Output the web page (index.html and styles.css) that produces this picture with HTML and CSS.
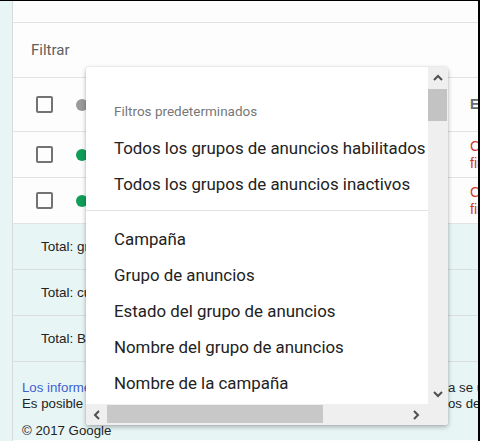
FILE: index.html
```html
<!DOCTYPE html>
<html lang="es">
<head>
<meta charset="utf-8">
<title>Filtrar</title>
<link rel="stylesheet" href="styles.css">
</head>
<body>
<div class="frame">
  <div class="rail"></div>
  <div class="main">
    <div class="topbar"></div>
    <div class="filterbar">Filtrar</div>
    <div class="row row-head">
      <div class="c-check"><span class="cb"></span></div>
      <div class="c-dot"><span class="dot dot-gray"></span></div>
      <div class="c-status status-head">Estado</div>
    </div>
    <div class="row">
      <div class="c-check"><span class="cb"></span></div>
      <div class="c-dot"><span class="dot dot-green"></span></div>
      <div class="c-status status-red">Campaña<br>finalizada</div>
    </div>
    <div class="row">
      <div class="c-check"><span class="cb"></span></div>
      <div class="c-dot"><span class="dot dot-green"></span></div>
      <div class="c-status status-red">Campaña<br>finalizada</div>
    </div>
    <div class="total">Total: grupos de anuncios filtrados</div>
    <div class="total">Total: cuenta</div>
    <div class="total">Total: Búsqueda</div>
    <div class="footer">
      <div class="fline"><span class="fl link">Los informes de datos se actualizan periódicamente</span><span class="fr">a se usan para</span></div>
      <div class="fline"><span class="fl">Es posible que algunos datos no estén disponibles</span><span class="fr">os de la cuenta</span></div>
      <div class="copy">© 2017 Google</div>
    </div>
  </div>

  <div class="dropdown">
    <div class="dd-content">
      <div class="dd-head">Filtros predeterminados</div>
      <div class="dd-item">Todos los grupos de anuncios habilitados</div>
      <div class="dd-item">Todos los grupos de anuncios inactivos</div>
      <div class="dd-divider"></div>
      <div class="dd-item">Campaña</div>
      <div class="dd-item">Grupo de anuncios</div>
      <div class="dd-item">Estado del grupo de anuncios</div>
      <div class="dd-item">Nombre del grupo de anuncios</div>
      <div class="dd-item">Nombre de la campaña</div>
    </div>
    <div class="vscroll">
      <div class="sb-btn sb-up"><svg width="10" height="7" viewBox="0 0 10 7"><path d="M1 6 L5 2 L9 6" fill="none" stroke="#505050" stroke-width="2"/></svg></div>
      <div class="vthumb"></div>
      <div class="sb-track"></div>
      <div class="sb-btn sb-down"><svg width="10" height="7" viewBox="0 0 10 7"><path d="M1 1 L5 5 L9 1" fill="none" stroke="#505050" stroke-width="2"/></svg></div>
    </div>
    <div class="hscroll">
      <div class="sb-btn sb-left"><svg width="7" height="10" viewBox="0 0 7 10"><path d="M6 1 L2 5 L6 9" fill="none" stroke="#505050" stroke-width="2"/></svg></div>
      <div class="hthumb"></div>
      <div class="sb-track"></div>
      <div class="sb-btn sb-right"><svg width="7" height="10" viewBox="0 0 7 10"><path d="M1 1 L5 5 L1 9" fill="none" stroke="#505050" stroke-width="2"/></svg></div>
    </div>
    <div class="corner"></div>
  </div>
</div>
</body>
</html>
```

FILE: styles.css
```css
html, body {
  margin: 0;
  padding: 0;
}
body {
  width: 478px;
  height: 440px;
  border-top: 1px solid #000;
  border-right: 2px solid #000;
  overflow: hidden;
  background: #fff;
  font-family: "Liberation Sans", Arial, sans-serif;
}
.frame {
  position: relative;
  display: flex;
  height: 440px;
}
.rail {
  width: 12px;
  flex: none;
  background: #e8f5f5;
  border-right: 1px solid #d6dcdc;
}
.main {
  width: 465px;
  flex: none;
  overflow: hidden;
  background: #fdfdfd;
}
.topbar {
  height: 21px;
  border-bottom: 1px solid #e3e3e3;
}
.filterbar {
  height: 54px;
  border-bottom: 1px solid #e3e3e3;
  display: flex;
  align-items: center;
  padding-left: 18px;
  font-family: Roboto, "Liberation Sans", sans-serif;
  font-size: 15px;
  color: #62605c;
}
.row {
  display: grid;
  grid-template-columns: 50px 407px 100px;
  height: 45px;
  border-bottom: 1px solid #e3e3e3;
  align-items: center;
}
.row-head {
  height: 53px;
}
.c-check {
  padding-left: 23px;
  display: flex;
}
.cb {
  width: 13px;
  height: 13px;
  border: 2px solid #737373;
  border-radius: 2px;
}
.c-dot {
  padding-left: 13px;
  display: flex;
}
.dot {
  width: 12px;
  height: 12px;
  border-radius: 50%;
}
.dot-gray { background: #9a9a9a; }
.dot-green { background: #0f9d58; }
.c-status {
  font-size: 14px;
  line-height: 17px;
  white-space: nowrap;
}
.status-head {
  font-weight: bold;
  color: #646a70;
}
.status-red {
  color: #d0392b;
}
.total {
  height: 45px;
  background: #e8f5f5;
  border-bottom: 1px solid #d9dede;
  display: flex;
  align-items: center;
  padding-left: 28px;
  font-size: 13.5px;
  color: #222;
  white-space: nowrap;
}
.footer {
  background: #e8f5f5;
  height: 78px;
  padding: 18px 0 0 9px;
  box-sizing: border-box;
  font-size: 13.25px;
  line-height: 16px;
  color: #222;
}
.fline {
  display: flex;
  white-space: nowrap;
}
.fl {
  width: 426px;
  flex: none;
  overflow: hidden;
}
.fr {
  flex: none;
}
.link {
  color: #3d5fd1;
}
.copy {
  margin-top: 11px;
}

/* dropdown */
.dropdown {
  position: absolute;
  left: 86px;
  top: 66px;
  width: 362px;
  height: 358px;
  display: grid;
  grid-template-columns: 342px 20px;
  grid-template-rows: 337px 21px;
  background: #fff;
  border-radius: 3px;
  overflow: hidden;
  box-shadow: 0 2px 5px rgba(0, 0, 0, 0.28), 0 0 2px rgba(0, 0, 0, 0.12);
}
.dd-content {
  overflow: hidden;
  white-space: nowrap;
  padding-top: 34px;
  font-family: Roboto, "Liberation Sans", sans-serif;
}
.dd-head {
  padding-left: 28px;
  font-size: 13.5px;
  line-height: 20px;
  color: #777;
  margin-bottom: 9px;
}
.dd-item {
  padding-left: 28px;
  font-size: 16.85px;
  line-height: 36px;
  color: #222;
}
.dd-divider {
  height: 1px;
  background: #e2e2e2;
  margin: 8px 0 10px;
}
.vscroll {
  display: flex;
  flex-direction: column;
  background: #efefef;
}
.hscroll {
  display: flex;
  background: #efefef;
}
.sb-btn {
  display: flex;
  align-items: center;
  justify-content: center;
  flex: none;
}
.sb-up, .sb-down {
  height: 20px;
}
.sb-left {
  width: 20px;
}
.sb-right {
  width: 24px;
}
.sb-track {
  flex: 1;
}
.vthumb {
  height: 32px;
  margin: 2px 1px 0 0;
  background: #c3c3c3;
}
.hthumb {
  width: 216px;
  margin: 1px 0 2px 1px;
  background: #c8c8c8;
}
.corner {
  background: #efefef;
}
```
